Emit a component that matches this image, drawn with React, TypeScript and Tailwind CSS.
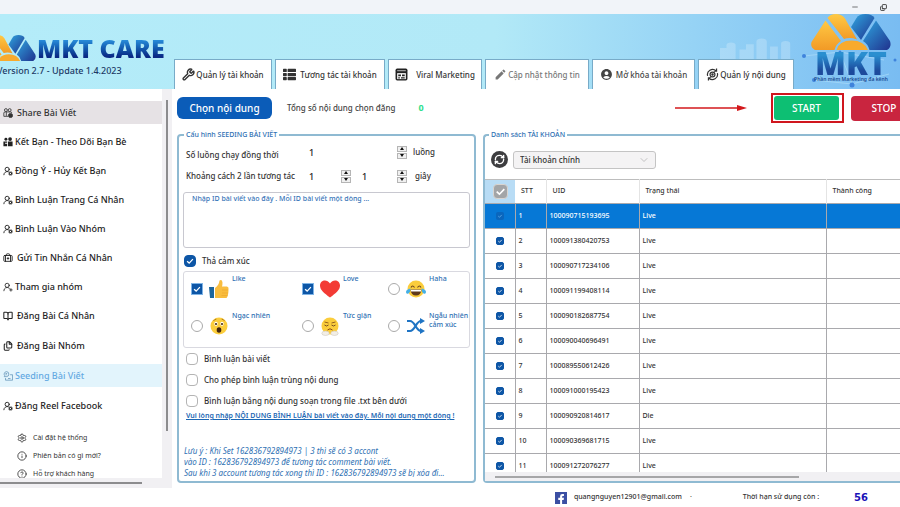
import React, { useState } from "react";
import {
  Wrench,
  RefreshCw,
  UserRoundCog,
  UserRoundPlus,
  BriefcaseMedical,
  BookOpen,
  Files,
  Settings,
  Info,
  CircleHelp,
  ChevronDown,
  Minus,
  Copy,
} from "lucide-react";
import { MdAccountCircle, MdEdit } from "react-icons/md";
import { FaThList } from "react-icons/fa";

type IconType = React.ComponentType<{ className?: string }>;

function LogoMark({ id, className }: { id: string; className: string }) {
  return (
    <svg viewBox="0 0 80 36" preserveAspectRatio="none" className={className} aria-hidden="true">
      <defs>
        <linearGradient id={id + "-o"} x1="0" y1="0" x2="0" y2="1">
          <stop offset="0" stopColor="#ffc944" />
          <stop offset="1" stopColor="#f29a26" />
        </linearGradient>
        <linearGradient id={id + "-b"} x1="0" y1="0" x2="1" y2="1">
          <stop offset="0" stopColor="#2fa6e0" />
          <stop offset="1" stopColor="#20328e" />
        </linearGradient>
      </defs>
      <path d="M14.500 6.500 L30 27 Q25 30 23.500 36 H4 Q-1 33 0.500 28 Z" fill={"url(#" + id + "-o)"} />
      <path d="M16.500 4 Q19 0 25 0 Q31 0 34 4.500 L46 25.500 Q39 23 33 25 Z" fill={"url(#" + id + "-o)"} />
      <path d="M25.500 36 Q28 26.500 40.500 26.500 Q53 26.500 57 36 Z" fill="#f8aa2d" />
      <path d="M40 13 L45.500 4 Q48 0 54.500 0 Q61 0 63.500 4 L50 26 Z" fill={"url(#" + id + "-b)"} />
      <path d="M65 6.500 L79 27 Q81 33 76 36 H58.500 Q57 30 52 27 Z" fill={"url(#" + id + "-b)"} />
    </svg>
  );
}

function Skyline({ className }: { className: string }) {
  return (
    <svg viewBox="0 0 120 60" preserveAspectRatio="none" className={className} aria-hidden="true">
      <path
        d="M0 60V30h10V22a7 7 0 0 1 14 0v38h6V34h10v-14h12v40h4V12a8 8 0 0 1 16 0v48h5V26h12v34h5V18a7 7 0 0 1 14 0v42z"
        fill="#ffffff"
        opacity="0.22"
      />
    </svg>
  );
}

function WrenchIcon({ className }: { className?: string }) {
  return <Wrench className={className} strokeWidth={2.6} />;
}

function BrowserIcon({ className }: { className?: string }) {
  return (
    <svg viewBox="0 0 24 24" className={className} aria-hidden="true">
      <rect x="1" y="1" width="22" height="22" rx="3" fill="#222" />
      <path d="M4 5h16" stroke="#ddd" strokeWidth="1.500" />
      <path d="M4 9.500h16v11H4z" fill="#fff" />
      <path d="M6 12h5v3H6zM13 12h5v3h-5zM6 17h3v2.500H6zM11 17h7v2.500h-7z" fill="#222" />
    </svg>
  );
}

function CycleIcon({ className }: { className?: string }) {
  return (
    <svg viewBox="0 0 24 24" fill="none" stroke="currentColor" strokeWidth="2.200" className={className} aria-hidden="true">
      <path d="M3 14.500A9.500 9.500 0 0 1 18.500 5M21 9.500A9.500 9.500 0 0 1 5.500 19" />
      <path d="M19.500 1v5h-5M4.500 23v-5h5" />
      <circle cx="12" cy="12" r="4.500" />
      <circle cx="12" cy="12" r="1.200" fill="currentColor" />
    </svg>
  );
}

function FriendsOutline({ className }: { className?: string }) {
  return (
    <svg viewBox="0 0 24 24" fill="none" stroke="currentColor" strokeWidth="2" className={className} aria-hidden="true">
      <circle cx="7" cy="5" r="3.500" />
      <circle cx="16" cy="5" r="3.500" />
      <path d="M2 20V12q0-2.500 3-2.500h13q3 0 3 2.500M2 20h10M8 10v9" />
      <circle cx="18" cy="18" r="5" fill="currentColor" />
    </svg>
  );
}

function FriendsSolid({ className }: { className?: string }) {
  return (
    <svg viewBox="0 0 24 24" fill="currentColor" className={className} aria-hidden="true">
      <circle cx="7" cy="5.500" r="3.500" />
      <circle cx="17" cy="5" r="4.500" />
      <path d="M1 11h9v3H5v2h5v6H1zM12 11h11v11H12z" />
    </svg>
  );
}

function UserBadge({ className }: { className?: string }) {
  return <UserRoundCog className={className} strokeWidth={2.2} />;
}

function CaseIcon({ className }: { className?: string }) {
  return <BriefcaseMedical className={className} strokeWidth={2.2} />;
}

function BookIcon({ className }: { className?: string }) {
  return <BookOpen className={className} strokeWidth={2.5} />;
}

function FilesIcon({ className }: { className?: string }) {
  return <Files className={className} strokeWidth={2.5} />;
}

function SeedingIcon({ className }: { className?: string }) {
  return (
    <svg viewBox="0 0 24 24" fill="none" stroke="#5d8fb5" strokeWidth="1.800" className={className} aria-hidden="true">
      <path d="M8 1.500a6 6 0 0 1 6 6 6 6 0 0 1-6 6H3l1-2.500A6 6 0 0 1 8 1.500z" />
      <path d="M17 9h6v13H6v-5" />
      <path d="M6 6h4M6 9h3M12 18h6" />
    </svg>
  );
}

function Tick({ className }: { className: string }) {
  return (
    <svg viewBox="0 0 12 12" className={className} aria-hidden="true">
      <path d="M2.500 6.200 L5 8.500 L9.500 3.800" fill="none" stroke="currentColor" strokeWidth="1.500" />
    </svg>
  );
}

function CheckBox({
  label,
  id,
  checked,
  box,
  tick = "size-[10px] text-white",
}: {
  label?: string;
  id?: string;
  checked?: boolean;
  box: string;
  tick?: string;
}) {
  const [on, setOn] = useState(!!checked);
  return (
    <span className="inline-grid shrink-0 place-items-center align-middle">
      <input
        type="checkbox"
        id={id}
        aria-label={label}
        checked={on}
        onChange={(e) => setOn(e.target.checked)}
        className={"col-start-1 row-start-1 appearance-none " + box}
      />
      {on && <Tick className={"pointer-events-none col-start-1 row-start-1 " + tick} />}
    </span>
  );
}

const tabs: { label: string; icon: IconType; width: string; tone: string; gap: string }[] = [
  { label: "Quản lý tài khoản", icon: WrenchIcon, width: "w-[98px]", tone: "text-[#333]", gap: "gap-px" },
  { label: "Tương tác tài khoản", icon: FaThList, width: "w-[110px]", tone: "text-[#333]", gap: "gap-[4px]" },
  { label: "Viral Marketing", icon: BrowserIcon, width: "w-[94px]", tone: "text-[#333]", gap: "gap-[8px]" },
  { label: "Cập nhật thông tin", icon: MdEdit, width: "w-[104px]", tone: "text-[#777]", gap: "gap-px" },
  { label: "Mở khóa tài khoản", icon: MdAccountCircle, width: "w-[103px]", tone: "text-[#444]", gap: "gap-[3px]" },
  { label: "Quản lý nội dung", icon: CycleIcon, width: "w-[96px]", tone: "text-[#333]", gap: "gap-px" },
];

function Header() {
  return (
    <header className="flex h-[75px] shrink-0 bg-linear-to-r from-[#b4ecf9] via-[#b2e9f7] via-55% to-[#79bcf2]">
      <div className="flex w-[174px] shrink-0 flex-col pt-[20px]">
        <div className="flex h-[28px] items-center">
          <LogoMark id="brand" className="-ml-[19px] h-[26px] w-[55px] shrink-0" />
          <span className="ml-px bg-linear-to-b from-[#2a8fdc] from-20% to-[#0b2a86] to-80% bg-clip-text font-['Open_Sans'] text-[25px] leading-[28px] font-extrabold whitespace-nowrap text-transparent">
            MKT CARE
          </span>
        </div>
        <p className="-ml-[3px] text-[9px] leading-[18px] font-medium whitespace-nowrap text-[#1d3a66]">
          Version 2.7 - Update 1.4.2023
        </p>
      </div>
      <nav className="flex shrink-0 items-end gap-[3px]">
        {tabs.map(({ label, icon: Icon, width, tone, gap }) => (
          <button
            key={label}
            type="button"
            className={
              "flex h-[30px] items-center justify-center border border-b-0 border-[#78abc8] bg-white text-[8px] font-medium whitespace-nowrap " +
              width + " " + tone + " " + gap
            }
          >
            <Icon className="size-[13px] shrink-0" />
            {label}
          </button>
        ))}
      </nav>
      <div className="relative flex flex-1 justify-end pr-[9px]">
        <Skyline className="absolute bottom-[30px] -left-[74px] h-[22px] w-[78px]" />
        <svg className="absolute inset-0 size-full" aria-hidden="true">
          <path d="M10 42L46 38L90 46M20 66L58 70L95 60M46 38L58 70" stroke="#a6d8f8" strokeWidth="0.8" fill="none" />
          <g fill="#3f83dc">
            <circle cx="10" cy="42" r="2" />
            <circle cx="46" cy="38" r="1.500" />
            <circle cx="20" cy="66" r="2" />
            <circle cx="58" cy="71" r="2.500" />
            <circle cx="101" cy="46" r="1.500" />
          </g>
        </svg>
        <div className="relative flex w-[80px] flex-col items-center">
          <LogoMark id="mkt" className="h-[36px] w-[80px]" />
          <span className="bg-linear-to-b from-[#2a8fd0] from-20% to-[#1d4a9c] to-80% bg-clip-text font-['Open_Sans'] text-[32px] leading-[26px] font-extrabold text-transparent">
            MKT
          </span>
          <span className="text-[5px] leading-[7px] font-semibold whitespace-nowrap text-[#1b4a92]">
            Phần mềm Marketing đa kênh
          </span>
        </div>
      </div>
    </header>
  );
}

type MenuItem = { label: string; icon: IconType; wide?: boolean; state?: string };

const interactions: MenuItem[] = [
  { label: "Share Bài Viết", icon: FriendsOutline, wide: true, state: "bg-[#e6e2e5] text-[#333]" },
  { label: "Kết Bạn - Theo Dõi Bạn Bè", icon: FriendsSolid },
  { label: "Đồng Ý - Hủy Kết Bạn", icon: UserBadge },
  { label: "Bình Luận Trang Cá Nhân", icon: UserBadge },
  { label: "Bình Luận Vào Nhóm", icon: UserBadge },
  { label: "Gửi Tin Nhắn Cá Nhân", icon: CaseIcon, wide: true },
  { label: "Tham gia nhóm", icon: UserRoundPlus },
];

const posting: MenuItem[] = [
  { label: "Đăng Bài Cá Nhân", icon: BookIcon, wide: true },
  { label: "Đăng Bài Nhóm", icon: FilesIcon, wide: true },
  { label: "Seeding Bài Viết", icon: SeedingIcon, state: "bg-[#e2f4fc] text-[#64a9e2]" },
  { label: "Đăng Reel Facebook", icon: UserBadge },
];

const support: MenuItem[] = [
  { label: "Cài đặt hệ thống", icon: Settings },
  { label: "Phiên bản có gì mới?", icon: Info },
  { label: "Hỗ trợ khách hàng", icon: CircleHelp },
];

function MenuButton({ item }: { item: MenuItem }) {
  const Icon = item.icon;
  return (
    <button
      type="button"
      className={
        "flex h-[23px] items-center pl-[3px] text-[9px] font-medium whitespace-nowrap " +
        (item.wide ? "gap-[4px] " : "gap-[2px] ") +
        (item.state ?? "text-[#222]")
      }
    >
      <Icon className="size-[10px] shrink-0" />
      {item.label}
    </button>
  );
}

function Sidebar() {
  return (
    <aside className="grid w-[172px] shrink-0 grid-cols-[1fr_10px] grid-rows-[minmax(0,1fr)_10px] bg-[#f1f0f3]">
      <nav className="flex flex-col overflow-hidden bg-white pt-[12px]">
        <div className="flex shrink-0 flex-col gap-[6px]">
          {interactions.map((item) => <MenuButton key={item.label} item={item} />)}
        </div>
        <div className="mt-[6px] flex shrink-0 flex-col gap-[7px]">
          {posting.map((item) => <MenuButton key={item.label} item={item} />)}
        </div>
        <div className="mt-[12px] flex shrink-0 flex-col">
          {support.map(({ label, icon: Icon }) => (
            <button
              key={label}
              type="button"
              className="flex h-[18px] items-center gap-[6px] pl-[17px] text-[7px] whitespace-nowrap text-[#333]"
            >
              <Icon className="size-[10px] shrink-0" />
              {label}
            </button>
          ))}
        </div>
      </nav>
      <div className="flex justify-center pt-[11px] pb-[47px]">
        <div className="w-[2px] bg-[#8c8c8e]" />
      </div>
      <div className="flex items-center pr-[20px]">
        <div className="h-[2px] flex-1 bg-[#8c8c8e]" />
      </div>
    </aside>
  );
}

function Stepper({ label, width }: { label: string; width: string }) {
  const [value, setValue] = useState(1);
  const arrow = "flex h-[6px] w-[10px] items-center justify-center border border-[#b5b5b5] bg-[#f0f0f0]";
  return (
    <div className={"flex items-center " + width}>
      <input
        aria-label={label}
        value={value}
        onChange={(e) => setValue(Number(e.target.value) || 0)}
        className="h-[14px] w-0 min-w-0 flex-1 pl-px text-[9px] font-medium text-[#222] outline-none"
      />
      <div className="flex flex-col gap-px">
        <button type="button" aria-label={label + " +"} onClick={() => setValue(value + 1)} className={arrow}>
          <svg viewBox="0 0 6 3" className="h-[3px] w-[6px]"><path d="M3 0L5 3H1z" fill="#111" /></svg>
        </button>
        <button type="button" aria-label={label + " -"} onClick={() => setValue(value - 1)} className={arrow}>
          <svg viewBox="0 0 6 3" className="h-[3px] w-[6px]"><path d="M3 3L1 0H5z" fill="#111" /></svg>
        </button>
      </div>
    </div>
  );
}

function Thumb() {
  return (
    <svg viewBox="0 0 20 20" className="size-[20px] shrink-0" aria-hidden="true">
      <path d="M6 9Q10 6 10.500 1.500Q13 0 13.500 3.500Q13.500 6 13 7.500H18Q20 8 19.500 10Q19.500 17 17.500 19H6z" fill="#f9bd3e" />
      <path d="M13 11h6M13 14h6M12.500 16.500h6" stroke="#e9a42b" strokeWidth="0.6" />
      <path d="M0 8h5v11H1z" fill="#1f669c" />
    </svg>
  );
}

function Heart() {
  return (
    <svg viewBox="0 0 20 18" className="h-[18px] w-[20px] shrink-0" aria-hidden="true">
      <path d="M10 17.500C4 13 0 10 0 5.500C0 0 7-1.500 10 3.500C13-1.500 20 0 20 5.500C20 10 16 13 10 17.500z" fill="#f33b35" />
    </svg>
  );
}

function Face({ kind }: { kind: "haha" | "wow" | "angry" }) {
  return (
    <svg viewBox="0 0 20 20" className="size-[20px] shrink-0" aria-hidden="true">
      <circle cx="10" cy="10" r="8.500" fill="#fbcd3c" />
      {kind === "haha" && (
        <g>
          <path d="M5 8.500q1.500-3 3.500 0M11.500 8.500q2-3 3.500 0" fill="none" stroke="#6b4520" strokeWidth="1.100" />
          <path d="M4.500 10.500h11q-.5 6-5.500 6t-5.500-6z" fill="#5f3a1c" />
          <path d="M5 10.800h10v1.700h-10z" fill="#fff" />
          <path d="M4.500 9.500q-4.500 1-4.500 3.500t2.500 1.500q2-1.500 2-5zM15.500 9.500q4.500 1 4.500 3.500t-2.500 1.500q-2-1.500-2-5z" fill="#45b0e6" />
        </g>
      )}
      {kind === "wow" && (
        <g>
          <ellipse cx="7" cy="7.800" rx="1.700" ry="2.100" fill="#fff" />
          <ellipse cx="13" cy="7.800" rx="1.700" ry="2.100" fill="#fff" />
          <circle cx="7" cy="8" r="1.100" fill="#4a3018" />
          <circle cx="13" cy="8" r="1.100" fill="#4a3018" />
          <path d="M4.500 5q1-1.800 2.800-1.800M15.500 5q-1-1.800-2.800-1.800" fill="none" stroke="#a26a18" strokeWidth="0.8" />
          <ellipse cx="10" cy="14" rx="2.300" ry="2.700" fill="#42260f" />
        </g>
      )}
      {kind === "angry" && (
        <g>
          <path d="M4.500 6l4 1M15.500 6l-4 1" stroke="#8a5618" strokeWidth="0.900" />
          <path d="M4.500 9q2 2 4 0M11.500 9q2 2 4 0" fill="none" stroke="#6b4520" strokeWidth="0.900" />
          <path d="M7.500 14q2.500-2.500 5 0" fill="none" stroke="#8a4a18" strokeWidth="1" />
          <ellipse cx="5.500" cy="17.300" rx="3.700" ry="2.200" fill="#f2eee6" stroke="#c9c2b5" strokeWidth="0.5" />
          <ellipse cx="14.500" cy="17.300" rx="3.700" ry="2.200" fill="#f2eee6" stroke="#c9c2b5" strokeWidth="0.5" />
        </g>
      )}
    </svg>
  );
}

function ShuffleArrows() {
  return (
    <svg viewBox="0 0 20 16" className="h-[16px] w-[20px] shrink-0" aria-hidden="true">
      <path d="M1 3H4Q6.500 3 9.500 8T15 13M1 13H4Q6.500 13 9.500 8T15 3" fill="none" stroke="#1f74c4" strokeWidth="2.200" />
      <path d="M14 0L19 3L14 6zM14 10L19 13L14 16z" fill="#1f74c4" />
    </svg>
  );
}

const reactions: { id: string; label: string; checked?: boolean; art: React.ReactNode }[] = [
  { id: "like", label: "Like", checked: true, art: <Thumb /> },
  { id: "love", label: "Love", checked: true, art: <Heart /> },
  { id: "haha", label: "Haha", art: <Face kind="haha" /> },
  { id: "wow", label: "Ngạc nhiên", art: <Face kind="wow" /> },
  { id: "angry", label: "Tức giận", art: <Face kind="angry" /> },
  { id: "random", label: "Ngẫu nhiên cảm xúc", art: <ShuffleArrows /> },
];

const options = ["Bình luận bài viết", "Cho phép bình luận trùng nội dung", "Bình luận bằng nội dung soạn trong file .txt bên dưới"];

function SeedingPanel() {
  return (
    <fieldset className="w-[299px] shrink-0 rounded-[4px] border-2 border-[#8fbad2] px-[4px] text-[8px] text-[#333]">
      <legend className="ml-[1px] px-[2px] text-[7px] leading-[10px] font-medium text-[#2e70b3]">Cấu hình SEEDING BÀI VIẾT</legend>
      <div className="flex h-[22px] items-center pt-[2px] pl-[3px] font-medium">
        <span className="w-[122px] self-end leading-[14px]">Số luồng chạy đồng thời</span>
        <Stepper label="Số luồng" width="w-[99px]" />
        <span className="ml-[6px]">luồng</span>
      </div>
      <div className="flex h-[26px] items-center pt-[2px] pl-[3px] font-medium">
        <span className="w-[122px]">Khoảng cách 2 lần tương tác</span>
        <Stepper label="Khoảng cách từ" width="w-[43px]" />
        <Stepper label="Khoảng cách đến" width="ml-[10px] w-[46px]" />
        <span className="ml-[8px]">giây</span>
      </div>
      <textarea
        aria-label="ID bài viết"
        placeholder="Nhập ID bài viết vào đây . Mỗi ID bài viết một dòng ..."
        className="mt-[4px] block h-[56px] w-full resize-none rounded-[3px] border border-[#c8c8d0] px-[8px] py-px text-[7px] leading-[10px] font-medium outline-none placeholder:text-[#3674b8]"
      />
      <div className="flex h-[23px] items-center gap-[6px] pt-[2px] pl-px font-medium">
        <CheckBox id="reaction" checked box="size-[12px] rounded-[4px] border border-[#0d56a6] bg-white checked:bg-[#0d56a6]" />
        <label htmlFor="reaction">Thả cảm xúc</label>
      </div>
      <div className="grid h-[77px] grid-cols-[111px_86px_1fr] grid-rows-[34px_34px] gap-y-[3px] rounded-[3px] border border-[#d9d9e0] pl-[7px]">
        {reactions.map(({ id, label, checked, art }) => (
          <div key={id} className="flex items-center gap-[6px]">
            {checked ? (
              <CheckBox id={id} checked box="size-[12px] border border-[#7fb4e6] bg-white checked:bg-[#0d56a6]" />
            ) : (
              <input type="radio" name="reaction-kind" id={id} className="size-[12px] shrink-0 appearance-none rounded-full border border-[#aaa] bg-white checked:border-4 checked:border-[#0d56a6]" />
            )}
            <div className="flex h-[34px] min-w-0 gap-[3px]">
              <span className="flex items-center">{art}</span>
              <label htmlFor={id} className="pt-[2px] text-[7px] leading-[9px] font-medium text-[#2e70b3]">
                {label}
              </label>
            </div>
          </div>
        ))}
      </div>
      <div className="flex flex-col pl-[3px] font-medium">
        {options.map((text, i) => (
          <div key={text} className="flex h-[21px] items-center gap-[6px] pt-px">
            <CheckBox id={"option-" + i} box="size-[12px] rounded-[4px] border border-[#b4b4b4] bg-white checked:bg-[#0d56a6]" />
            <label htmlFor={"option-" + i}>{text}</label>
          </div>
        ))}
      </div>
      <a href="#content" className="block pl-[3px] text-[7px] leading-[10px] font-semibold whitespace-nowrap text-[#1c67b4] underline">
        Vui lòng nhập NỘI DUNG BÌNH LUẬN bài viết vào đây. Mỗi nội dung một dòng !
      </a>
      <p className="mt-[24px] pl-px text-[8px] leading-[11px] whitespace-nowrap text-[#2e70b3] italic">
        Lưu ý : Khi Set 162836792894973 | 3 thì sẽ có 3 accont
        <br />
        vào ID : 162836792894973 để tương tác comment bài viết.
        <br />
        Sau khi 3 account tương tác xong thì ID : 162836792894973 sẽ bị xóa đi...
      </p>
    </fieldset>
  );
}

const accounts: [string, string][] = [
  ["100090715193695", "Live"],
  ["100091380420753", "Live"],
  ["100090717234106", "Live"],
  ["100091199408114", "Live"],
  ["100090182687754", "Live"],
  ["100090040696491", "Live"],
  ["100089550612426", "Live"],
  ["100091000195423", "Live"],
  ["100090920814617", "Die"],
  ["100090369681715", "Live"],
  ["100091272076277", "Live"],
];

function AccountsPanel() {
  return (
    <fieldset className="flex min-w-0 flex-1 flex-col rounded-l-[4px] border-2 border-r-0 border-[#8fbad2]">
      <legend className="ml-[4px] px-[2px] text-[7px] leading-[10px] font-medium text-[#2e70b3]">Danh sách TÀI KHOẢN</legend>
      <div className="flex h-[39px] shrink-0 items-center gap-[5px] pl-[6px]">
        <button type="button" aria-label="Tải lại" className="flex size-[17px] items-center justify-center rounded-full bg-[#3d3d3f] text-white">
          <RefreshCw className="size-[11px]" strokeWidth={3} />
        </button>
        <div className="grid w-[143px] items-center">
          <select
            aria-label="Loại tài khoản"
            className="col-start-1 row-start-1 h-[18px] appearance-none rounded-[3px] border border-[#c4c4c4] bg-[#f4f3f4] pl-[6px] text-[8px] font-medium text-[#333]"
          >
            <option>Tài khoản chính</option>
          </select>
          <ChevronDown className="pointer-events-none col-start-1 row-start-1 mr-[6px] size-[12px] justify-self-end text-[#b0b0b0]" strokeWidth={1.5} />
        </div>
      </div>
      <div className="min-h-0 flex-1 overflow-hidden">
        <table className="w-full table-fixed border-collapse text-left text-[7px] font-medium text-[#333]">
          <colgroup>
            <col className="w-[30px]" />
            <col className="w-[31px]" />
            <col className="w-[93px]" />
            <col className="w-[187px]" />
            <col />
          </colgroup>
          <thead>
            <tr className="h-[24px] border-t border-[#bdbdbd]">
              <th className="bg-[#b8dcf5] text-center leading-none">
                <CheckBox label="Chọn tất cả" checked box="size-[15px] rounded-[4px] border border-[#d8d4d0] bg-[#a3a5a7]" tick="size-[13px] text-white" />
              </th>
              <th className="border-r border-[#e4e4e4] pl-[6px] font-medium">STT</th>
              <th className="border-r border-[#e4e4e4] pl-[6px] font-medium">UID</th>
              <th className="border-r border-[#e4e4e4] pl-[6px] font-medium">Trạng thái</th>
              <th className="pl-[6px] font-medium">Thành công</th>
            </tr>
          </thead>
          <tbody>
            {accounts.map(([uid, status], i) => (
              <tr key={uid} className={"h-[25px] border-t border-[#a9a9ad] " + (i === 0 ? "bg-[#0678d6] text-white" : "")}>
                <td className="border-r border-[#a9a9ad] text-center leading-none">
                  <CheckBox
                    label={uid}
                    checked
                    box={i === 0 ? "size-[8px] rounded-[2px] bg-[#0a66bd]" : "size-[8px] rounded-[2px] border border-[#0d56a6] bg-white checked:bg-[#0d56a6]"}
                    tick={i === 0 ? "size-[6px] text-[#6fb1ea]" : "size-[6px] text-white"}
                  />
                </td>
                <td className="border-r border-[#a9a9ad] pl-[3px]">{i + 1}</td>
                <td className="border-r border-[#a9a9ad] pl-[3px]">{uid}</td>
                <td className="border-r border-[#a9a9ad] pl-[3px]">{status}</td>
                <td />
              </tr>
            ))}
          </tbody>
        </table>
      </div>
      <div className="flex h-[9px] shrink-0 items-center bg-[#f1f0f3] pl-[10px]">
        <div className="h-[2px] w-3/4 bg-[#a6a6a8]" />
      </div>
    </fieldset>
  );
}

export default function App() {
  return (
    <div className="flex h-screen flex-col overflow-hidden bg-white font-['Noto_Sans','Open_Sans',sans-serif]">
      <div className="flex h-[14px] shrink-0 items-center justify-end gap-[21px] bg-[#f1f4f9] pr-[13px] text-[#333]">
        <button type="button" aria-label="Thu nhỏ"><Minus className="size-[8px]" /></button>
        <button type="button" aria-label="Khôi phục"><Copy className="size-[7px] -scale-y-100" strokeWidth={3} /></button>
      </div>
      <Header />
      <div className="flex min-h-0 flex-1">
        <Sidebar />
        <main className="flex min-w-0 flex-1 flex-col overflow-hidden pb-[5px] pl-[5px]">
          <div className="flex h-[41px] shrink-0 items-center pb-[3px]">
            <button type="button" className="h-[22px] w-[95px] rounded-[6px] bg-[#0b5cb8] text-[10px] font-medium whitespace-nowrap text-white">
              Chọn nội dung
            </button>
            <span className="ml-[15px] text-[8px] font-medium whitespace-nowrap text-[#444]">Tổng số nội dung chọn đăng</span>
            <output className="ml-[23px] text-[9px] font-bold text-[#2fe08c]">0</output>
            <svg viewBox="0 0 72 8" className="ml-auto h-[8px] w-[72px] shrink-0" aria-hidden="true">
              <path d="M0 4H63" stroke="#d3181c" strokeWidth="1.500" />
              <path d="M62 1L72 4L62 7z" fill="#d3181c" />
            </svg>
            <div className="ml-[24px] shrink-0 border-2 border-[#d0161e] py-px pr-[3px] pl-px">
              <button type="button" className="block h-[24px] w-[65px] rounded-[3px] bg-[#0dbf73] text-[10px] font-medium text-white">
                START
              </button>
            </div>
            <button type="button" className="mr-[-17px] ml-[7px] h-[25px] w-[66px] shrink-0 rounded-[4px] bg-[#c9253f] text-[10px] font-medium text-white">
              STOP
            </button>
          </div>
          <div className="flex min-h-0 flex-1 gap-[7px]">
            <SeedingPanel />
            <AccountsPanel />
          </div>
        </main>
      </div>
      <footer className="flex h-[19px] shrink-0 items-center justify-end pr-[32px] text-[7px] font-medium text-[#333]">
        <span className="mr-[7px] flex size-[12px] items-end justify-center bg-[#3b4fa3]">
          <svg viewBox="0 0 8 12" className="h-[11px] w-[8px]" aria-hidden="true">
            <path d="M3 12V7.500H1V5.200H3V3.500Q3 1 5.500 1H7.200V3.200H6Q5.200 3.200 5.200 4V5.200H7.200L6.900 7.500H5.200V12z" fill="#fff" />
          </svg>
        </span>
        <span>quangnguyen12901@gmail.com</span>
        <span className="ml-[8px]">·</span>
        <span className="ml-[51px]">Thời hạn sử dụng còn :</span>
        <output className="ml-[35px] font-['DejaVu_Sans'] text-[10px] font-bold text-[#1a12b8]">56</output>
      </footer>
    </div>
  );
}
